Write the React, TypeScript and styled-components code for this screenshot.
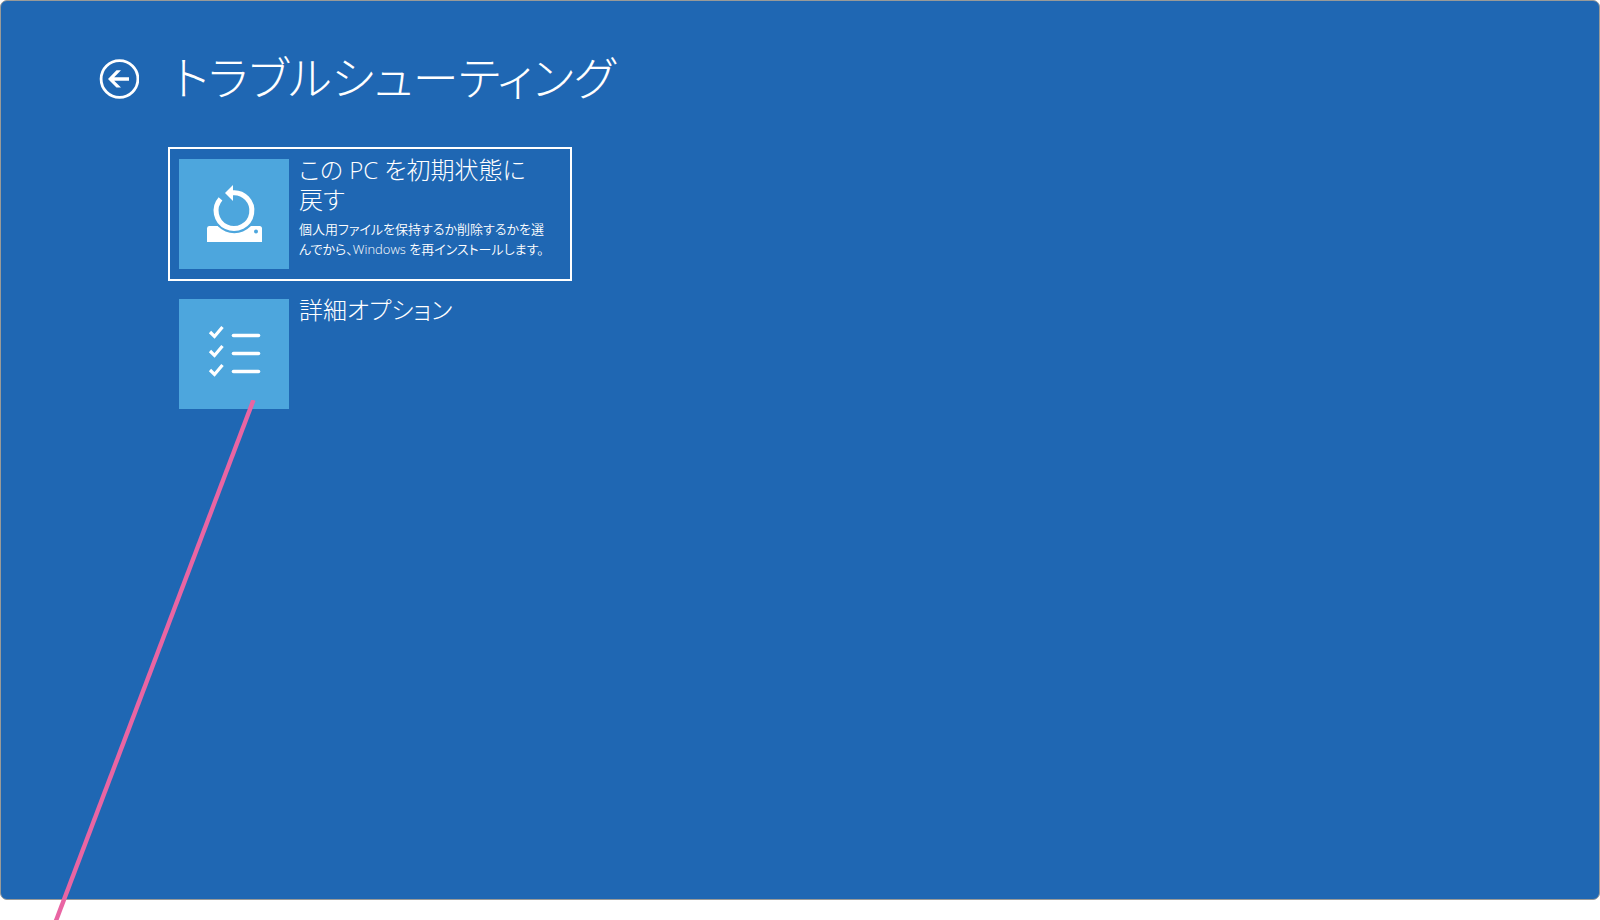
import React from "react";
import styled, { createGlobalStyle } from "styled-components";

const GlobalStyle = createGlobalStyle`
  * { box-sizing: border-box; }
  html, body { margin: 0; background: #ffffff; }
  body {
    font-family: "Open Sans", "Noto Sans CJK JP", sans-serif;
    font-weight: 300;
    font-feature-settings: "palt";
    color: #ffffff;
  }
`;

const Page = styled.div`
  position: relative;
  min-height: 100vh;
  overflow: hidden;
  padding-bottom: 20px;
  display: flex;
`;

const Screen = styled.main`
  flex: 1;
  background: #1f67b3;
  border: 1px solid #999a98;
  border-radius: 7px;
  padding: 40px 98px;
`;

const Header = styled.header`
  display: flex;
  align-items: center;
  gap: 34px;
  height: 76px;
`;

const BackButton = styled.button`
  width: 40px;
  height: 40px;
  padding: 0;
  border: 0;
  background: none;
  color: inherit;
  svg { display: block; }
`;

const Title = styled.h1`
  margin: 0;
  padding-bottom: 4px;
  font-size: 46px;
  line-height: 72px;
  font-weight: 300;
  white-space: nowrap;
`;

const Options = styled.div`
  display: flex;
  flex-direction: column;
  align-items: flex-start;
  gap: 6px;
  margin: 30px 0 0 69px;
`;

const OptionCard = styled.button<{ $selected?: boolean }>`
  display: flex;
  align-items: flex-start;
  gap: 10px;
  width: 404px;
  max-width: 100%;
  padding: 6px 9px 10px;
  border: 2px solid ${(p) => (p.$selected ? "#ffffff" : "transparent")};
  background: none;
  color: inherit;
  font: inherit;
  font-feature-settings: inherit;
  text-align: left;
`;

const Tile = styled.span`
  flex: none;
  display: block;
  width: 110px;
  height: 110px;
  margin-top: 4px;
  background: #4da6dd;
  svg { display: block; }
`;

const OptionText = styled.span`
  display: flex;
  flex-direction: column;
  gap: 4px;
  white-space: nowrap;
`;

const OptionTitle = styled.span`
  font-size: 24px;
  line-height: 30px;
`;

const Description = styled.span`
  font-size: 13px;
  line-height: 20px;
  font-weight: 350;
`;

const Pointer = styled.svg`
  position: absolute;
  left: 0;
  top: 400px;
  pointer-events: none;
`;

const BackIcon = () => (
  <svg width="40" height="40" viewBox="0 0 40 40" fill="none" aria-hidden="true">
    <circle cx="20.500" cy="20" r="18.400" stroke="#fff" strokeWidth="2.800" />
    <path d="M9 20 17.500 11.300H22L15.200 18.200H30V21.800H15.200L22 28.600H17.500Z" fill="#fff" />
  </svg>
);

const ResetIcon = () => (
  <svg width="110" height="110" viewBox="0 0 110 110" aria-hidden="true">
    <path d="M30 67H80.500Q83 67 83 69.500V83H28V69.500Q28 67 30 67Z" fill="#fff" />
    <circle cx="55.300" cy="51.500" r="22.800" fill="#4da6dd" />
    <path d="M41.500 39.800A17.900 17.900 0 1 0 53 33.800" fill="none" stroke="#fff" strokeWidth="5" />
    <path d="M46 34 54 26V42Z" fill="#fff" />
    <circle cx="77" cy="72.500" r="2" fill="#4da6dd" />
  </svg>
);

const ChecklistIcon = () => (
  <svg width="110" height="110" viewBox="0 0 110 110" fill="none" stroke="#fff" aria-hidden="true">
    {[0, 19, 38].map((y) => (
      <path key={y} d={`M31 ${33 + y}L35.500 ${37.5 + y}L43.500 ${28 + y}`} strokeWidth="3.200" />
    ))}
    {[36.5, 54.5, 72.5].map((y) => (
      <path key={y} d={`M54.500 ${y}H79.500`} strokeWidth="3.600" strokeLinecap="round" />
    ))}
  </svg>
);

export default function App() {
  return (
    <Page>
      <GlobalStyle />
      <Screen>
        <Header>
          <BackButton type="button" aria-label="戻る">
            <BackIcon />
          </BackButton>
          <Title>トラブルシューティング</Title>
        </Header>
        <Options>
          <OptionCard type="button" $selected>
            <Tile>
              <ResetIcon />
            </Tile>
            <OptionText>
              <OptionTitle>
                この PC を初期状態に
                <br />
                戻す
              </OptionTitle>
              <Description>
                個人用ファイルを保持するか削除するかを選
                <br />
                んでから、Windows を再インストールします。
              </Description>
            </OptionText>
          </OptionCard>
          <OptionCard type="button">
            <Tile>
              <ChecklistIcon />
            </Tile>
            <OptionText>
              <OptionTitle>詳細オプション</OptionTitle>
            </OptionText>
          </OptionCard>
        </Options>
      </Screen>
      <Pointer width="260" height="520" viewBox="0 0 260 520" aria-hidden="true">
        <path d="M253.500 0L55.500 522" stroke="#e965a3" strokeWidth="4.400" />
      </Pointer>
    </Page>
  );
}
